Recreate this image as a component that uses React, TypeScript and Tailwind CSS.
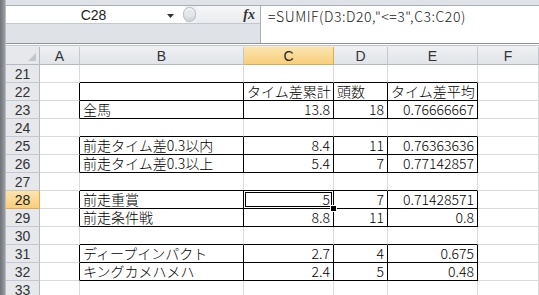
import React from "react";

// sheet data, columns B..E
const data: Record<number, string[]> = {
  22: ["", "タイム差累計", "頭数", "タイム差平均"],
  23: ["全馬", "13.8", "18", "0.76666667"],
  25: ["前走タイム差0.3以内", "8.4", "11", "0.76363636"],
  26: ["前走タイム差0.3以上", "5.4", "7", "0.77142857"],
  28: ["前走重賞", "5", "7", "0.71428571"],
  29: ["前走条件戦", "8.8", "11", "0.8"],
  31: ["ディープインパクト", "2.7", "4", "0.675"],
  32: ["キングカメハメハ", "2.4", "5", "0.48"],
};

const rows = [21, 22, 23, 24, 25, 26, 27, 28, 29, 30, 31, 32, 33];
const letters = ["A", "B", "C", "D", "E", "F"];

const inTable = (r: number, c: number) => r in data && c >= 1 && c <= 4;

function Cell({ r, c }: { r: number; c: number }) {
  const text = r in data && c >= 1 && c <= 4 ? data[r][c - 1] : "";
  const num = /^[\d.]+$/.test(text);
  const right = inTable(r, c) || inTable(r, c + 1) ? "border-r-black" : "border-r-[#d9dadc]";
  const bottom = inTable(r, c) || inTable(r + 1, c) ? "border-b-black" : "border-b-[#d9dadc]";
  const active = r === 28 && c === 2;
  return (
    <div
      className={`relative flex h-[18px] items-end border-r border-b whitespace-nowrap px-[3px] pb-[1px] text-[14px] leading-[16px] font-light text-black ${right} ${bottom} ${
        num ? "justify-end" : "justify-start"
      }`}
    >
      {text}
      {active && (
        <>
          <div className="absolute -top-px -left-px h-[19px] w-[91px] border-[3px] border-black" />
          <div className="absolute top-0 left-0 h-[17px] w-[89px] border border-white" />
          <div className="absolute -right-[4px] -bottom-[4px] z-10 h-[7px] w-[7px] border border-white bg-black" />
        </>
      )}
    </div>
  );
}

const headerFont = { fontFamily: '"Liberation Sans", sans-serif' };

export default function App() {
  return (
    <div
      className="flex h-[295px] w-[539px] overflow-hidden bg-white"
      style={{ fontFamily: '"Noto Sans CJK JP", "Liberation Sans", sans-serif' }}
    >
      {/* left window edge */}
      <div className="w-[6px] shrink-0 border-r border-[#b9bcc1] bg-gradient-to-r from-[#6f7276] to-[#9a9da2]" />

      <div className="flex w-[533px] flex-col">
        {/* top strip */}
        <div className="h-[6px] shrink-0 border-b border-[#a9aeb5] bg-[#dfe2e6]" />

        {/* name box + formula bar */}
        <div className="flex h-[37px] shrink-0">
          <div className="flex w-[254px] flex-col">
            <div className="flex h-[18px] border-b border-[#c4c8ce]">
              <div
                className="relative flex w-[179px] items-center justify-center bg-white text-[14px] leading-[16px] text-[#222]"
                style={headerFont}
              >
                <span className="-ml-[4px]">C28</span>
                <svg className="absolute top-[8px] right-[11px]" width="7" height="4" viewBox="0 0 7 4">
                  <path d="M0 0h7L3.5 4z" fill="#333" />
                </svg>
              </div>
              <div className="relative w-[12px] bg-[#eef0f3]">
                <div className="absolute top-[1px] -left-[2px] h-[15px] w-[13px] rounded-full border border-[#b6bbc2] bg-gradient-to-b from-[#f4f5f7] to-[#cfd3d9]" />
                <div className="absolute top-[4px] left-[1px] h-[7px] w-[7px] rounded-full bg-[#e3e6ea]" />
              </div>
              <div className="flex flex-1 items-center justify-end bg-gradient-to-b from-[#f6f7f9] to-[#e9ebee] pr-[5px]">
                <span
                  className="text-[14px] leading-[16px] font-bold italic text-[#333]"
                  style={{ fontFamily: '"Liberation Serif", serif' }}
                >
                  fx
                </span>
              </div>
            </div>
            <div className="flex-1 bg-[#dfe2e6]" />
          </div>
          <div className="flex-1 border-l border-[#a9aeb5] bg-white pt-[2px] pl-[7px] text-[14px] leading-[17px] font-light tracking-[0.55px] whitespace-nowrap text-[#222]">
            =SUMIF(D3:D20,"&lt;=3",C3:C20)
          </div>
        </div>

        {/* separator lines */}
        <div className="h-[4px] shrink-0 border-t border-[#8e949c] bg-white">
          <div className="mt-[1px] h-[2px] border-t border-[#c3c7cc] bg-[#eceef1]" />
        </div>

        {/* sheet */}
        <div className="grid grid-cols-[34px_40px_164px_90px_54px_90px_61px]" style={headerFont}>
          {/* header row */}
          <div className="relative h-[18px] border-r border-b border-[#b6bac0] bg-[#e6e8ec]">
            <svg className="absolute right-[3px] bottom-[3px]" width="8" height="8" viewBox="0 0 8 8">
              <path d="M8 0v8H0z" fill="#c3c6cb" />
            </svg>
          </div>
          {letters.map((l) => (
            <div
              key={l}
              className={`flex h-[18px] items-center justify-center border-r border-b text-[14px] leading-[16px] ${
                l === "C"
                  ? "border-r-[#e2a94d] border-b-[#e2a94d] bg-gradient-to-b from-[#fbe4b0] to-[#f7cf7c] text-[#222]"
                  : "border-r-[#c5c9cf] border-b-[#b6bac0] bg-gradient-to-b from-[#eef0f2] to-[#e1e4e8] text-[#333]"
              }`}
            >
              {l}
            </div>
          ))}

          {rows.map((r) => (
            <React.Fragment key={r}>
              <div
                className={`flex h-[18px] items-center justify-center border-r border-b text-[14px] leading-[16px] ${
                  r === 28
                    ? "border-r-[#e2a94d] border-b-[#e2a94d] bg-gradient-to-b from-[#fbe4b0] to-[#f7cf7c] text-[#222]"
                    : "border-r-[#b6bac0] border-b-[#c5c9cf] bg-[#e6e8ec] text-[#333]"
                }`}
              >
                {r}
              </div>
              <div
                className="contents"
                style={{ fontFamily: '"Noto Sans CJK JP", "Liberation Sans", sans-serif' }}
              >
                {letters.map((_, c) => (
                  <Cell key={c} r={r} c={c} />
                ))}
              </div>
            </React.Fragment>
          ))}
        </div>
      </div>
    </div>
  );
}
